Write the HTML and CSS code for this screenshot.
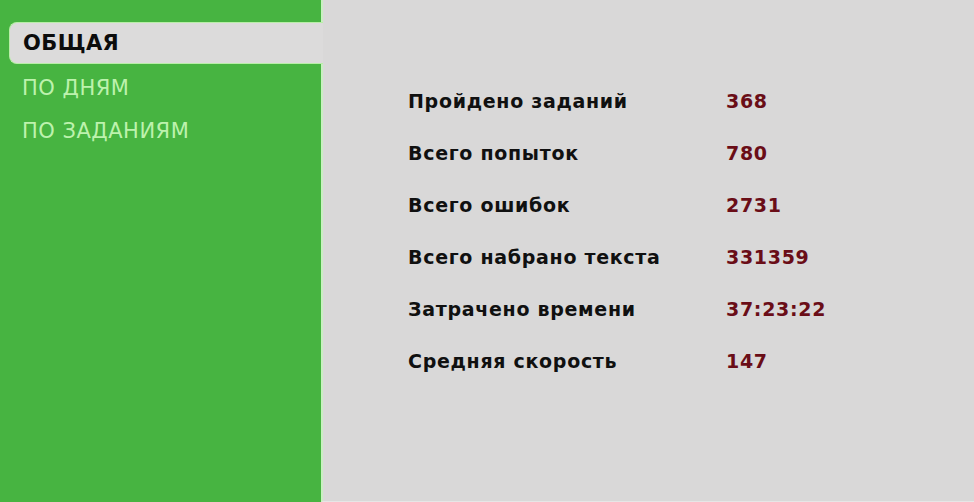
FILE: index.html
```html
<!DOCTYPE html>
<html lang="ru">
<head>
<meta charset="utf-8">
<title>Статистика</title>
<link rel="stylesheet" href="styles.css">
</head>
<body>
<div class="app">
  <nav class="sidebar">
    <div class="tab active">ОБЩАЯ</div>
    <div class="tab">ПО ДНЯМ</div>
    <div class="tab">ПО ЗАДАНИЯМ</div>
  </nav>
  <main class="panel">
    <div class="stats">
      <div class="label">Пройдено заданий</div><div class="value">368</div>
      <div class="label">Всего попыток</div><div class="value">780</div>
      <div class="label">Всего ошибок</div><div class="value">2731</div>
      <div class="label">Всего набрано текста</div><div class="value">331359</div>
      <div class="label">Затрачено времени</div><div class="value">37:23:22</div>
      <div class="label">Средняя скорость</div><div class="value">147</div>
    </div>
  </main>
</div>
</body>
</html>
```

FILE: styles.css
```css
html, body {
  margin: 0;
  padding: 0;
  height: 100%;
}
body {
  background: #d9d8d8;
  font-family: "DejaVu Sans", Verdana, sans-serif;
}
.app {
  display: flex;
  height: 502px;
}
.sidebar {
  width: 321px;
  flex: none;
  background: #47b441;
  padding-top: 22px;
  box-sizing: border-box;
  display: flex;
  flex-direction: column;
}
.tab {
  margin-left: 9px;
  height: 43.5px;
  box-sizing: border-box;
  padding-left: 13px;
  display: flex;
  align-items: center;
  font-size: 21px;
  color: #bdf2ad;
  letter-spacing: 0.5px;
}
.tab.active {
  height: 42px;
  margin-bottom: 2px;
  background: #dcdbdb;
  color: #0c0c0c;
  font-weight: bold;
  letter-spacing: 0.4px;
  border: 1.5px solid #b9eea8;
  border-right: none;
  border-radius: 8px 0 0 8px;
  margin-right: -2px;
  position: relative;
  z-index: 1;
}
.panel {
  flex: 1;
  background: #d9d8d8;
  border-left: 2px solid #c8f0c0;
  border-bottom: 1px solid #e6e6e6;
  padding: 90px 0 0 85px;
  box-sizing: border-box;
}
.stats {
  display: grid;
  grid-template-columns: 318px auto;
  grid-auto-rows: 52px;
  font-size: 19px;
  line-height: 22px;
  font-weight: bold;
  letter-spacing: 0.7px;
}
.label {
  color: #101010;
}
.value {
  color: #6a0d17;
}
```
